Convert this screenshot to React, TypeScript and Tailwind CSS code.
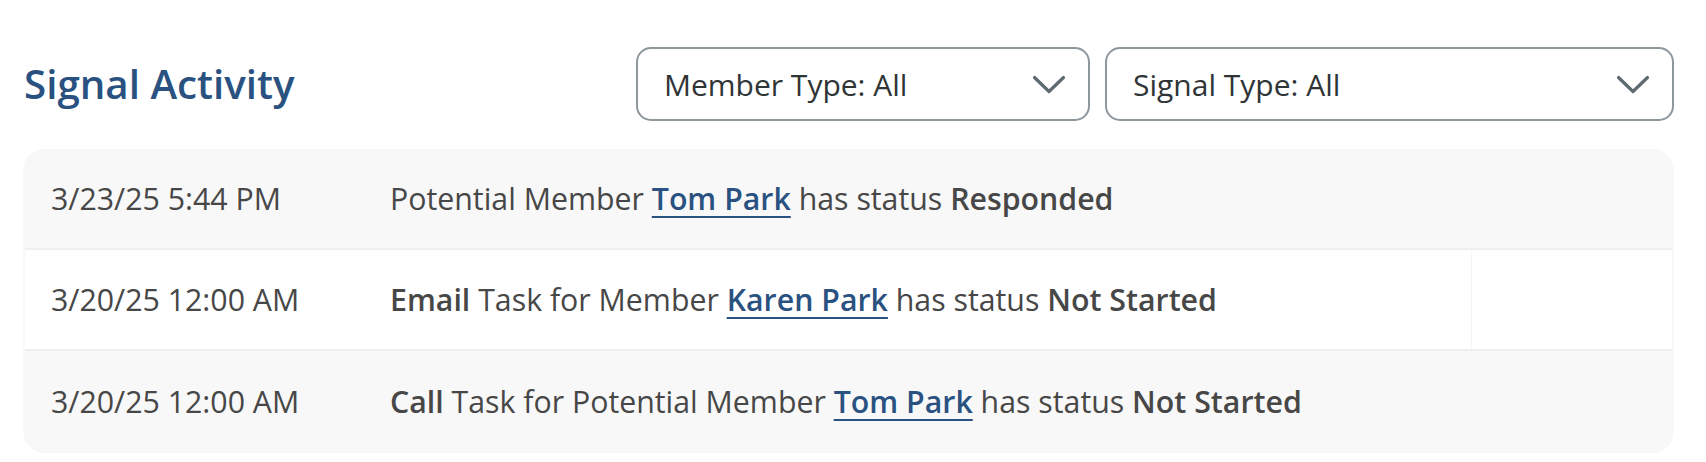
import React from "react";

type Part = { text: string; kind?: "bold" | "link" };

interface Signal {
  readonly when: string;
  readonly parts: readonly Part[];
}

const signals: readonly Signal[] = [
  {
    when: "3/23/25 5:44 PM",
    parts: [
      { text: "Potential Member " },
      { text: "Tom Park", kind: "link" },
      { text: " has status " },
      { text: "Responded", kind: "bold" },
    ],
  },
  {
    when: "3/20/25 12:00 AM",
    parts: [
      { text: "Email", kind: "bold" },
      { text: " Task for Member " },
      { text: "Karen Park", kind: "link" },
      { text: " has status " },
      { text: "Not Started", kind: "bold" },
    ],
  },
  {
    when: "3/20/25 12:00 AM",
    parts: [
      { text: "Call", kind: "bold" },
      { text: " Task for Potential Member " },
      { text: "Tom Park", kind: "link" },
      { text: " has status " },
      { text: "Not Started", kind: "bold" },
    ],
  },
];

function Chevron() {
  return (
    <svg width="34" height="19" viewBox="0 0 34 19" fill="none" className="shrink-0">
      <polyline
        points="2.5,2.5 17,16.5 31.5,2.5"
        stroke="#5f6a6f"
        strokeWidth="3.2"
        strokeLinecap="round"
        strokeLinejoin="round"
      />
    </svg>
  );
}

function FilterSelect({ label, width }: { label: string; width: string }) {
  return (
    <button
      className={`${width} h-[74px] flex items-center justify-between pl-[26px] pr-[22px] rounded-[15px] border-2 border-[#8d979c] bg-white text-[30px] text-[#2f3437]`}
    >
      <span>{label}</span>
      <Chevron />
    </button>
  );
}

export default function App() {
  return (
    <div className="w-[1706px] h-[462px] bg-white font-['Open_Sans',sans-serif]">
      <div className="ml-[23px] w-[1651px] pt-[47px]">
        <div className="flex items-center justify-between h-[74px]">
          <h2 className="pl-[1px] text-[40.3px] font-semibold text-[#2a5281] leading-none">
            Signal Activity
          </h2>
          <div className="flex gap-[15px]">
            <FilterSelect label="Member Type: All" width="w-[454px]" />
            <FilterSelect label="Signal Type: All" width="w-[569px]" />
          </div>
        </div>

        {/* activity list */}
        <div className="mt-[28px] rounded-[22px] bg-[#f8f8f8] px-[2px] overflow-hidden">
          {signals.map((s, i) => (
            <div
              key={i}
              className={`grid grid-cols-[365px_1fr_201px] h-[101px] text-[30.3px] text-[#474747] ${
                i % 2 === 1 ? "bg-white" : "bg-[#f8f8f8]"
              } ${i < signals.length - 1 ? "border-b-2 border-[#efefef]" : "h-[102px]"}`}
            >
              <div className="flex items-center pl-[26px]">{s.when}</div>
              <div className="flex items-center">
                <p className="whitespace-pre">
                  {s.parts.map((p, j) =>
                    p.kind === "link" ? (
                      <a
                        key={j}
                        href="#"
                        className="font-semibold text-[#2a5281] underline decoration-2 underline-offset-[6px]"
                      >
                        {p.text}
                      </a>
                    ) : p.kind === "bold" ? (
                      <b key={j} className="font-semibold">
                        {p.text}
                      </b>
                    ) : (
                      <span key={j}>{p.text}</span>
                    )
                  )}
                </p>
              </div>
              <div className="border-l border-[#f6f6f6]" />
            </div>
          ))}
        </div>
      </div>
    </div>
  );
}
